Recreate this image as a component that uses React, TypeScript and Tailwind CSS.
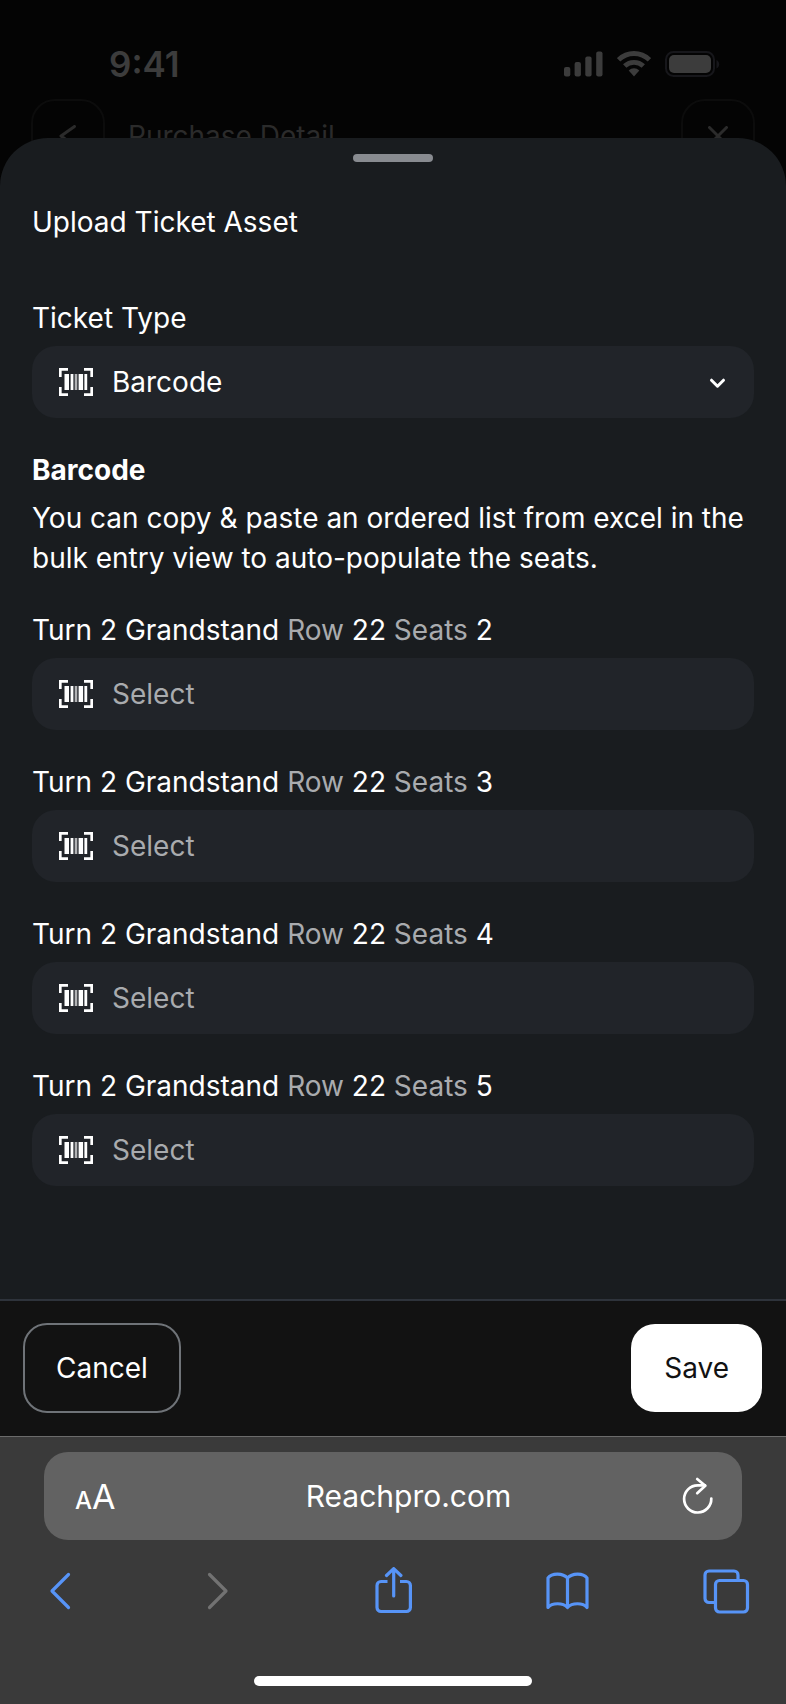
import { useState } from 'react';

const seats = ['2', '3', '4', '5'];

function BarcodeIcon() {
  return (
    <svg width="34" height="28" viewBox="0 0 34 28" className="shrink-0" aria-hidden="true">
      <path
        d="M1.3 9V1.4H9M25 1.4H32.7V9M32.7 19V26.6H25M9 26.6H1.3V19"
        fill="none"
        stroke="#fff"
        strokeWidth="2.7"
      />
      <g fill="#fff">
        <rect x="5.5" y="6" width="4.5" height="16" />
        <rect x="11.6" y="6" width="2.8" height="16" />
        <rect x="15.7" y="6" width="2.6" height="16" opacity="0.65" />
        <rect x="19.6" y="6" width="4.5" height="16" />
        <rect x="25.4" y="6" width="2.8" height="16" />
      </g>
    </svg>
  );
}

function StatusBar() {
  return (
    <div className="flex items-center justify-between pt-[40px] pr-[66px] pb-[11px] pl-[109px] text-[#3c3c3c]">
      <span className="text-[35px] leading-[48px] font-semibold">9:41</span>
      <div className="flex items-center gap-[14px]">
        <svg width="39" height="26" viewBox="0 0 39 26" fill="currentColor" aria-hidden="true">
          <rect x="0" y="16" width="6.3" height="9.5" rx="2" />
          <rect x="10.6" y="11" width="6.3" height="14.5" rx="2" />
          <rect x="21.3" y="5.6" width="6.3" height="19.9" rx="2" />
          <rect x="32.2" y="0.5" width="6.3" height="25" rx="2" />
        </svg>
        <svg width="34" height="26" viewBox="0 0 34 26" fill="none" stroke="currentColor" aria-hidden="true">
          <path d="M1.6 8.8A22 22 0 0 1 32.4 8.8" strokeWidth="4.8" />
          <path d="M7.7 15.1A13.4 13.4 0 0 1 26.3 15.1" strokeWidth="4.8" />
          <path d="M17 25.5L11.7 19.5A7.6 7.6 0 0 1 22.3 19.5Z" fill="currentColor" stroke="none" />
        </svg>
        <svg width="55" height="26" viewBox="0 0 55 26" aria-hidden="true">
          <rect x="1" y="1" width="48" height="24" rx="7.5" fill="none" stroke="#17171b" strokeWidth="2" />
          <rect x="4" y="4" width="42" height="18" rx="5" fill="currentColor" />
          <path d="M51.5 9v8.5c3.6-1.6 3.6-6.9 0-8.5Z" fill="#17171b" />
        </svg>
      </div>
    </div>
  );
}

function PageHeader() {
  const button =
    'flex size-[74px] items-center justify-center rounded-[24px] border-2 border-[#0c0c0c]';
  return (
    <div className="flex items-center px-[31px] text-[#2b2b2b]">
      <button type="button" aria-label="Back" className={button}>
        <svg width="18" height="22" viewBox="0 0 18 22" fill="none" stroke="currentColor" strokeWidth="3" strokeLinecap="round" strokeLinejoin="round">
          <path d="M15.5 1.5L2 11l13.5 9.5" />
        </svg>
      </button>
      <h1 className="flex-1 px-[23px] text-[28px] leading-[40px]">Purchase Detail</h1>
      <button type="button" aria-label="Close" className={button}>
        <svg width="20" height="20" viewBox="0 0 20 20" fill="none" stroke="currentColor" strokeWidth="3" strokeLinecap="round">
          <path d="M1.5 1.5l17 17M18.5 1.5l-17 17" />
        </svg>
      </button>
    </div>
  );
}

function SeatField({ seat }: { seat: string }) {
  const id = `seat-${seat}`;
  return (
    <div className="flex flex-col gap-2">
      <label htmlFor={id} className="leading-[40px] text-white">
        Turn 2 Grandstand <span className="text-[#a9abae]">Row</span> 22{' '}
        <span className="text-[#a9abae]">Seats</span> {seat}
      </label>
      <div className="flex h-[72px] items-center gap-[19px] rounded-[24px] bg-[#212429] px-[27px]">
        <BarcodeIcon />
        <input
          id={id}
          type="text"
          placeholder="Select"
          className="min-w-0 flex-1 bg-transparent text-white outline-none placeholder:text-[#a9abae]"
        />
      </div>
    </div>
  );
}

function BrowserBar() {
  return (
    <div className="border-t border-[#6b6b6b] bg-[#3a3a3a] pb-[18px]">
      <div className="mx-[44px] mt-[15px] flex h-[88px] items-center justify-between rounded-[24px] bg-[#626262] pr-[28px] pl-[31px] text-white">
        <button type="button" aria-label="Text size" className="flex w-[60px] items-baseline">
          <span className="text-[24px] font-medium">A</span>
          <span className="text-[34px]">A</span>
        </button>
        <span className="text-[30px] leading-[40px]">Reachpro.com</span>
        <button type="button" aria-label="Reload">
          <svg width="32" height="38" viewBox="0 0 32 38" fill="none" stroke="currentColor" strokeWidth="2.7" strokeLinecap="round" strokeLinejoin="round">
            <path d="M29.3 21.5A13.6 13.6 0 1 1 15.7 8.3H23" />
            <path d="M15.2 2L23.3 8.8L15.2 16.2" />
          </svg>
        </button>
      </div>
      <nav className="grid h-[102px] grid-cols-[3fr_4fr_4fr_4fr_3fr] items-center justify-items-center text-[#5794f7]">
        <button type="button" aria-label="Previous page" className="justify-self-start pl-[49px]">
          <svg width="22" height="38" viewBox="0 0 22 38" fill="none" stroke="currentColor" strokeWidth="3.2" strokeLinecap="round" strokeLinejoin="round">
            <path d="M19.5 2.5L3 19l16.5 16.5" />
          </svg>
        </button>
        <button type="button" aria-label="Next page" className="text-[#727272]">
          <svg width="22" height="38" viewBox="0 0 22 38" fill="none" stroke="currentColor" strokeWidth="3.2" strokeLinecap="round" strokeLinejoin="round">
            <path d="M2.5 2.5L19 19L2.5 35.5" />
          </svg>
        </button>
        <button type="button" aria-label="Share">
          <svg width="38" height="48" viewBox="0 0 38 48" fill="none" stroke="currentColor" strokeWidth="3.2" strokeLinecap="round" strokeLinejoin="round">
            <path d="M13.5 14.5H7A4 4 0 0 0 3 18.5V40.5A4 4 0 0 0 7 44.5H32.4A4 4 0 0 0 36.400 40.5V18.5A4 4 0 0 0 32.4 14.5H26" strokeLinecap="butt" />
            <path d="M19.7 29V2.500M12.500 8.500L19.7 1.600l7.200 6.900" />
          </svg>
        </button>
        <button type="button" aria-label="Bookmarks">
          <svg width="43" height="38" viewBox="0 0 43 38" fill="none" stroke="currentColor" strokeWidth="3.2" strokeLinecap="round" strokeLinejoin="round">
            <path d="M21.5 6C17 1 6 0.5 2 6V35.5C6 30.5 17 30.5 21.5 35.5C26 30.5 37 30.5 41 35.5V6C37 0.5 26 1 21.5 6ZV35.5" />
          </svg>
        </button>
        <button type="button" aria-label="Tabs" className="justify-self-end pr-[36px]">
          <svg width="47" height="45" viewBox="0 0 47 45" fill="none" stroke="currentColor" strokeWidth="3.2">
            <rect x="12.5" y="11.5" width="32" height="31.5" rx="4" />
            <path d="M12 33.5H6A4 4 0 0 1 2 29.5V6A4 4 0 0 1 6 2H31A4 4 0 0 1 35 6V11" />
          </svg>
        </button>
      </nav>
      <div className="mx-auto mt-[34px] h-[10px] w-[278px] rounded-full bg-white" />
    </div>
  );
}

export default function App() {
  const [ticketType, setTicketType] = useState('Barcode');

  return (
    <div className="flex min-h-screen flex-col bg-[#040404] font-['Inter',sans-serif] text-[28px]">
      <header>
        <StatusBar />
        <PageHeader />
      </header>

      {/* Bottom sheet */}
      <main className="relative -mt-[35px] flex flex-1 flex-col rounded-t-[48px] bg-[#191c1f] px-8 pt-4 text-white">
        <div className="mx-auto h-2 w-20 rounded-full bg-[#888b90]" />
        <h2 className="mt-[40px] leading-[40px]">Upload Ticket Asset</h2>

        <div className="mt-[56px] flex flex-col gap-2">
          <label htmlFor="ticket-type" className="leading-[40px]">
            Ticket Type
          </label>
          <div className="flex h-[72px] items-center gap-[19px] rounded-[24px] bg-[#212429] px-[27px]">
            <BarcodeIcon />
            <select
              id="ticket-type"
              value={ticketType}
              onChange={(e) => setTicketType(e.target.value)}
              className="min-w-0 flex-1 appearance-none bg-transparent text-white outline-none"
            >
              <option>Barcode</option>
              <option>PDF</option>
            </select>
            <svg width="18" height="14" viewBox="0 0 18 14" fill="none" stroke="#fff" strokeWidth="3" strokeLinecap="round" strokeLinejoin="round" aria-hidden="true">
              <path d="M2.5 5.2l6 6l6-6" />
            </svg>
          </div>
        </div>

        <h3 className="mt-8 leading-[40px] font-bold">Barcode</h3>
        <p className="mt-2 leading-[40px]">
          You can copy & paste an ordered list from excel in the bulk entry view to auto-populate the
          seats.
        </p>

        <div className="mt-8 mb-[112px] flex flex-col gap-8">
          {seats.map((seat) => (
            <SeatField key={seat} seat={seat} />
          ))}
        </div>
      </main>

      <footer className="flex items-center justify-between border-t-2 border-[#2e333b] bg-[#121212] pt-[22px] pr-6 pb-[23px] pl-[23px]">
        <button
          type="button"
          className="h-[90px] rounded-[24px] border-2 border-[#6f7378] px-[31px] text-white"
        >
          Cancel
        </button>
        <button type="button" className="h-[88px] rounded-[24px] bg-white px-[33px] text-[#121212]">
          Save
        </button>
      </footer>

      <BrowserBar />
    </div>
  );
}
